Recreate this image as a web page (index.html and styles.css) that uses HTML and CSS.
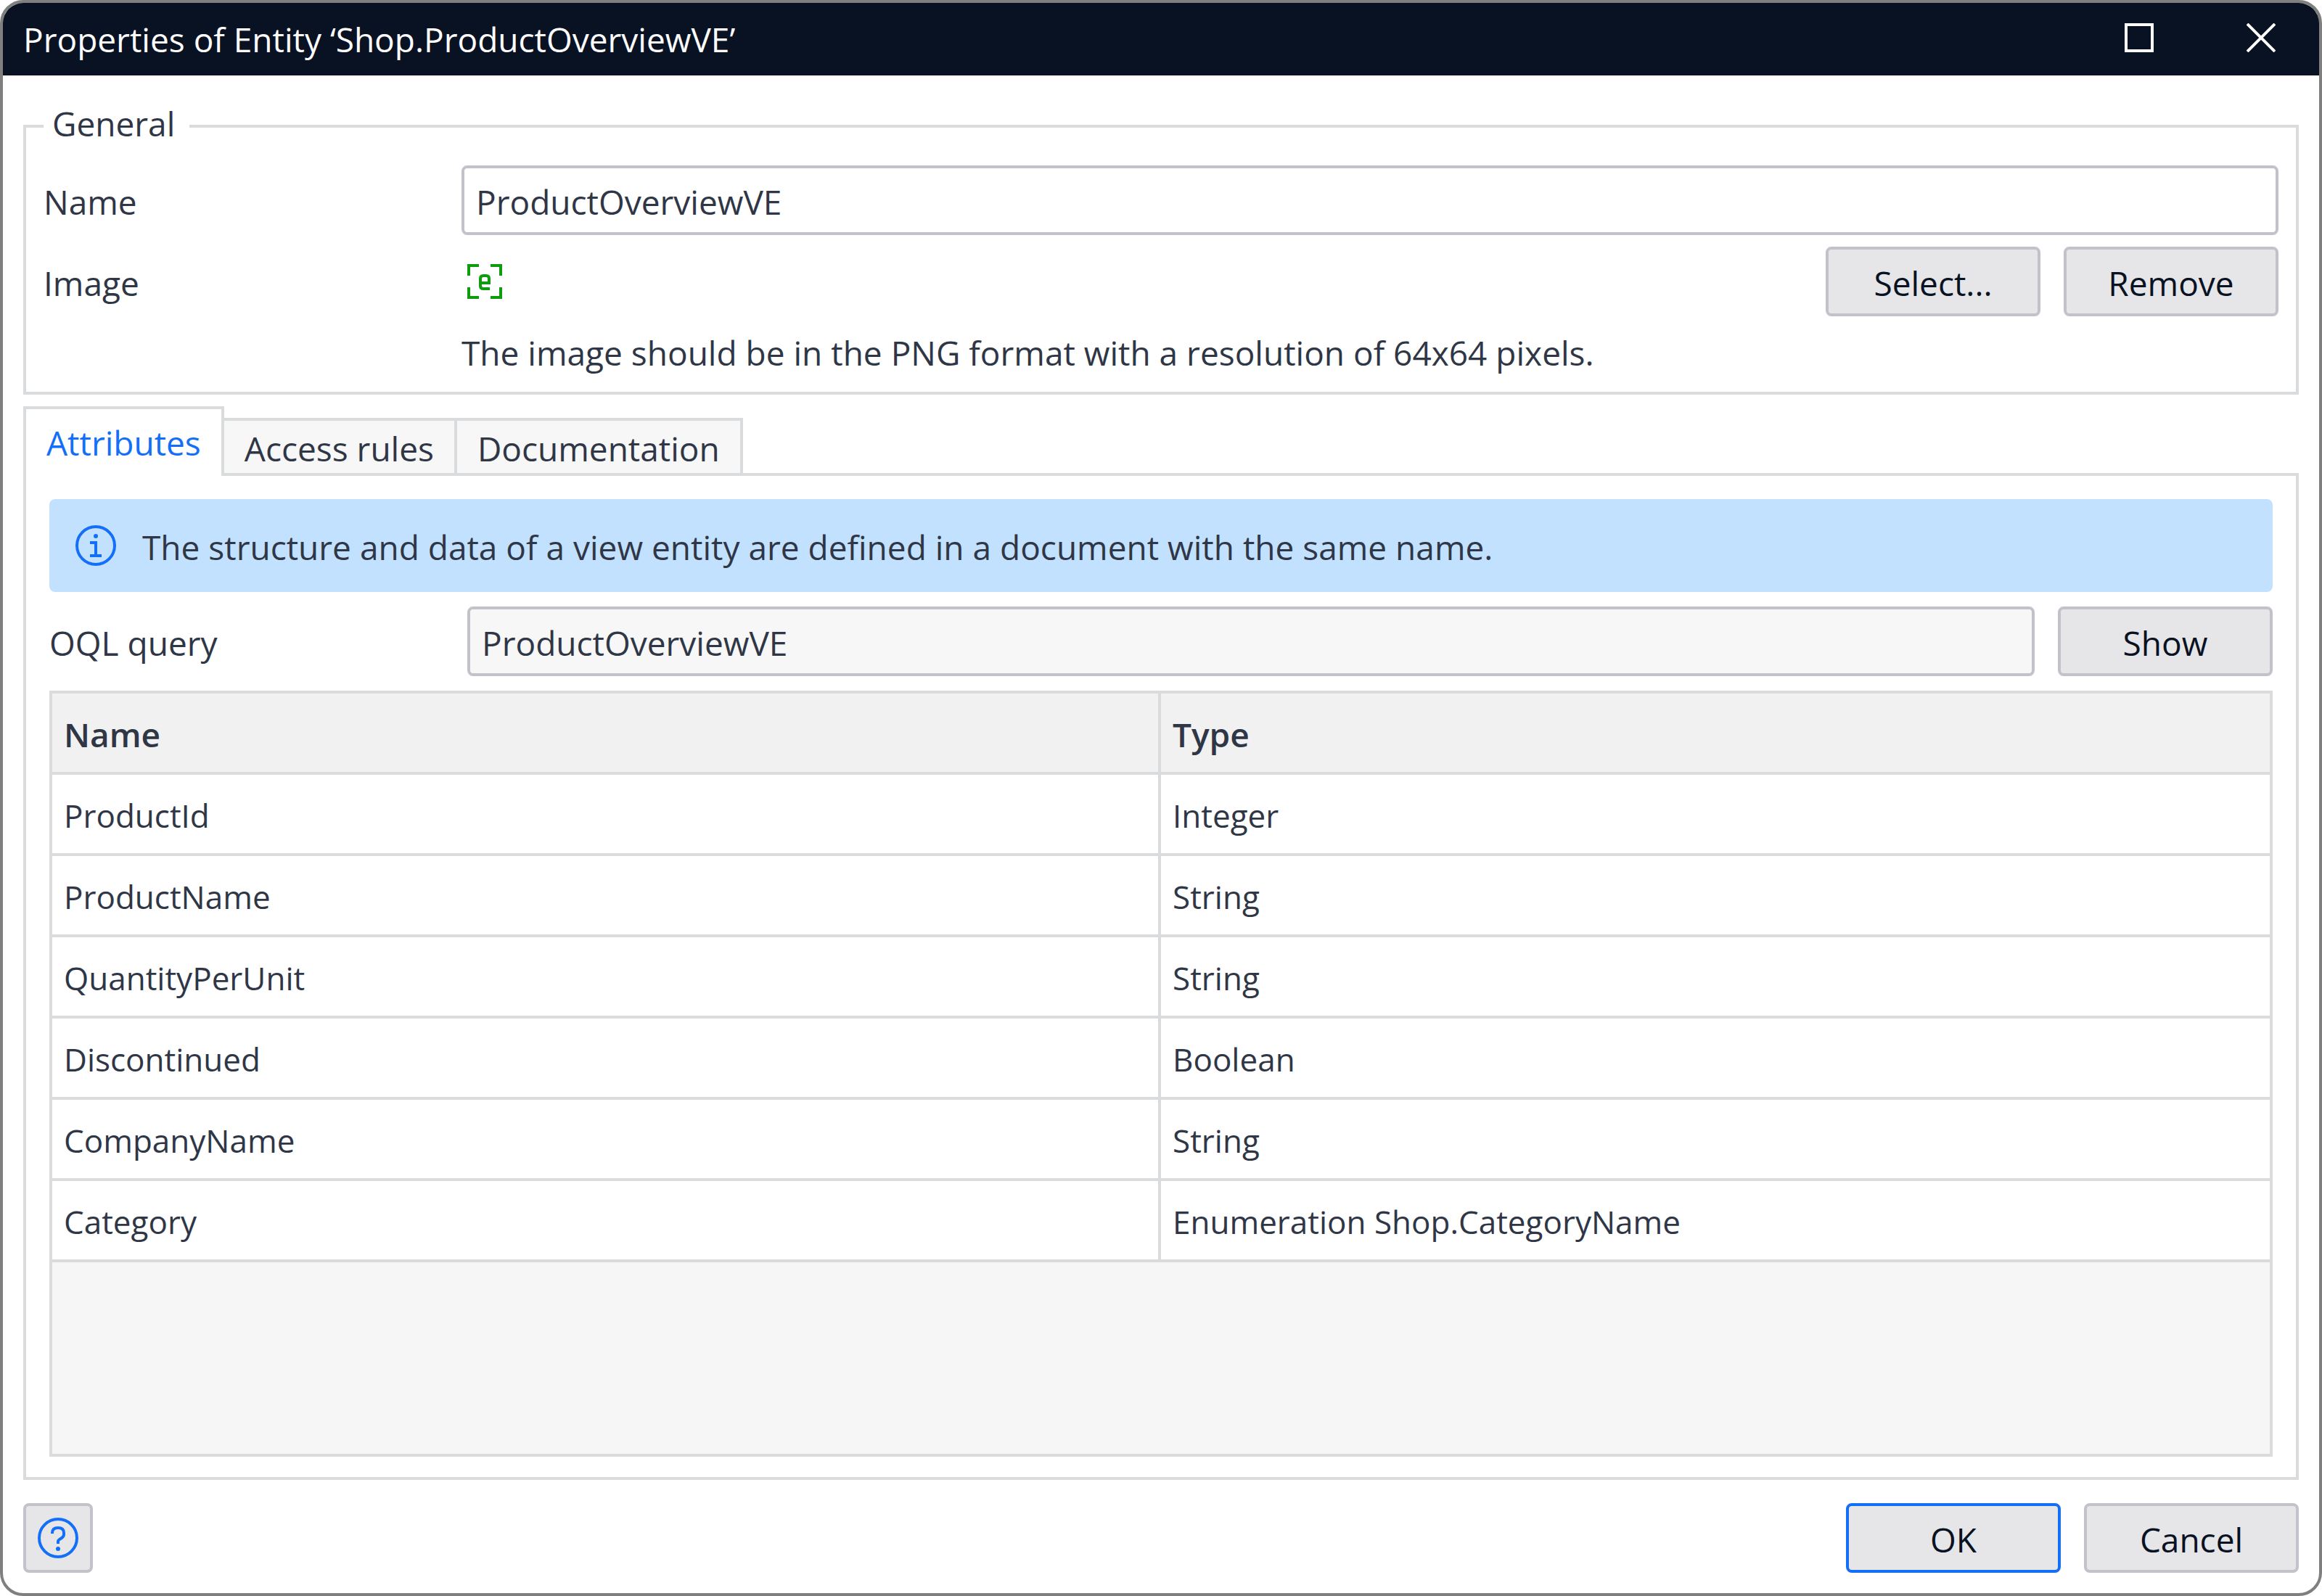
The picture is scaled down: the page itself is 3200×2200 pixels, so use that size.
FILE: index.html
```html
<!DOCTYPE html>
<html lang="en">
<head>
<meta charset="utf-8">
<title>Properties of Entity</title>
<link rel="stylesheet" href="styles.css">
</head>
<body>
<main class="dialog">
  <header class="titlebar">
    <h1 class="title">Properties of Entity ‘Shop.ProductOverviewVE’</h1>
    <button class="window-button" type="button" aria-label="Maximize">
      <svg width="40" height="40" viewBox="0 0 40 40"><rect x="2" y="2" width="36" height="36" fill="none" stroke="currentColor" stroke-width="4"/></svg>
    </button>
    <button class="window-button" type="button" aria-label="Close">
      <svg width="40" height="40" viewBox="0 0 40 40"><path d="M1 1 39 39M39 1 1 39" fill="none" stroke="currentColor" stroke-width="4"/></svg>
    </button>
  </header>

  <form class="body">
    <fieldset class="group">
      <legend class="legend">General</legend>
      <div class="group-rows">
        <div class="row">
          <label class="label" for="name">Name</label>
          <input class="field" id="name" type="text" value="ProductOverviewVE">
        </div>
        <div class="row">
          <span class="label">Image</span>
          <div class="preview">
            <svg width="64" height="64" viewBox="0 0 64 64" fill="none" stroke="#0f9d0f" stroke-width="4"><path d="M10 24V10H24M40 10H54V24M54 40V54H40M24 54H10V40"/><path d="M26 34H38V28Q38 24 34 24H30Q26 24 26 28V38Q26 42 30 42H39"/></svg>
          </div>
          <button class="button" type="button">Select...</button>
          <button class="button" type="button">Remove</button>
        </div>
        <p class="hint">The image should be in the PNG format with a resolution of 64x64 pixels.</p>
      </div>
    </fieldset>

    <div class="tabs" role="tablist">
      <button class="tab tab-active" type="button" role="tab" aria-selected="true">Attributes</button>
      <button class="tab" type="button" role="tab" aria-selected="false">Access rules</button>
      <button class="tab" type="button" role="tab" aria-selected="false">Documentation</button>
    </div>
    <section class="panel" role="tabpanel">
      <div class="banner">
        <svg width="56" height="56" viewBox="0 0 56 56" fill="none" stroke="#146ff8" stroke-width="4"><circle cx="28" cy="28" r="26"/><path d="M20 24H28V42M20 42H36"/><circle cx="28" cy="15" r="3" fill="#146ff8" stroke="none"/></svg>
        <p class="banner-text">The structure and data of a view entity are defined in a document with the same name.</p>
      </div>
      <div class="row">
        <label class="label" for="query">OQL query</label>
        <input class="field field-readonly" id="query" type="text" value="ProductOverviewVE" readonly>
        <button class="button" type="button">Show</button>
      </div>
      <div class="grid">
        <table class="table">
          <thead><tr><th>Name</th><th>Type</th></tr></thead>
          <tbody>
            <tr><td>ProductId</td><td>Integer</td></tr>
            <tr><td>ProductName</td><td>String</td></tr>
            <tr><td>QuantityPerUnit</td><td>String</td></tr>
            <tr><td>Discontinued</td><td>Boolean</td></tr>
            <tr><td>CompanyName</td><td>String</td></tr>
            <tr><td>Category</td><td>Enumeration Shop.CategoryName</td></tr>
          </tbody>
        </table>
      </div>
    </section>

    <footer class="footer">
      <button class="button button-help" type="button" aria-label="Help">
        <svg width="56" height="56" viewBox="0 0 56 56" fill="none" stroke="#146ff8" stroke-width="4"><circle cx="28" cy="28" r="26"/><path d="M20 22V21Q20 14 28 14Q36 14 36 21V23Q36 26 33 28L30 30Q28 31 28 33V36"/><circle cx="28" cy="43" r="3" fill="#146ff8" stroke="none"/></svg>
      </button>
      <button class="button button-primary" type="submit">OK</button>
      <button class="button" type="button">Cancel</button>
    </footer>
  </form>
</main>
</body>
</html>
```
FILE: styles.css
```css
* {
  box-sizing: border-box;
}

body {
  margin: 0;
  background: #fff;
  color: #2f3646;
  font: 46px/64px "Open Sans", "Noto Sans", sans-serif;
}

h1, p {
  margin: 0;
  font-size: inherit;
  font-weight: 400;
}

button, input {
  font: inherit;
  color: inherit;
}

svg {
  display: block;
  flex: none;
}

.dialog {
  display: flex;
  flex-direction: column;
  min-height: 100vh;
  border: 4px solid #7f7f7f;
  border-radius: 32px;
  overflow: hidden;
}

.titlebar {
  display: flex;
  align-items: center;
  height: 100px;
  padding: 0 32px 0 28px;
  gap: 72px;
  background: #091222;
  color: #fff;
}

.title {
  flex: 1;
}

.window-button {
  padding: 0 28px 4px;
  border: 0;
  background: none;
  color: #fff;
}

.body {
  flex: 1;
  display: flex;
  flex-direction: column;
  padding: 34px 28px 28px;
}

.group {
  min-width: 0;
  margin: 0 0 16px;
  padding: 18px 24px 22px;
  border: 4px solid #dadbdd;
}

.legend {
  padding: 0 20px 8px 12px;
}

.group-rows {
  display: grid;
  gap: 16px;
}

.row {
  display: flex;
  align-items: center;
}

.label {
  flex: none;
  width: 576px;
  padding-top: 4px;
}

.field {
  flex: 1;
  min-width: 0;
  height: 96px;
  padding: 4px 16px 0;
  border: 4px solid #c2c3ca;
  border-radius: 8px;
  background: #fff;
}

.field-readonly {
  background: #f7f7f7;
}

.preview {
  flex: 1;
}

.hint {
  padding: 2px 0 0 576px;
}

.button {
  width: 296px;
  height: 96px;
  margin-left: 32px;
  padding: 4px 0 0;
  border: 4px solid #c2c3ca;
  border-radius: 8px;
  background: #e6e6e9;
  color: #091222;
}

.tabs {
  z-index: 1;
  display: flex;
  align-items: flex-end;
  margin-bottom: -4px;
}

.tab {
  height: 80px;
  padding: 4px 28px 0;
  border: 4px solid #dadbdd;
  border-left: 0;
  background: #f7f7f7;
}

.tab-active {
  height: 96px;
  padding: 0 28px;
  border-left: 4px solid #dadbdd;
  border-bottom: 0;
  background: #fff;
  color: #146ff8;
}

.panel {
  flex: 1;
  display: flex;
  flex-direction: column;
  gap: 20px;
  padding: 32px 32px 28px;
  border: 4px solid #dadbdd;
}

.banner {
  display: flex;
  align-items: center;
  gap: 36px;
  height: 128px;
  padding: 0 36px;
  border-radius: 8px;
  background: #c2e1ff;
}

.banner-text {
  padding-top: 4px;
}

.grid {
  flex: 1;
  border: 4px solid #dadbdd;
  background: #f6f6f6;
}

.table {
  width: 100%;
  table-layout: fixed;
  border-collapse: separate;
  border-spacing: 0;
  background: #fff;
}

.table th,
.table td {
  height: 112px;
  padding: 4px 16px 0;
  border-bottom: 4px solid #dadbdd;
  text-align: left;
}

.table th {
  background: #f1f1f1;
  font-weight: 600;
}

.table td {
  font-size: 44px;
}

.table th:first-child,
.table td:first-child {
  border-right: 4px solid #dadbdd;
}

.footer {
  display: flex;
  margin-top: 32px;
}

.button-help {
  display: flex;
  align-items: center;
  justify-content: center;
  width: 96px;
  margin: 0 auto 0 0;
  padding: 0;
}

.button-primary {
  border-color: #146ff8;
}
```
